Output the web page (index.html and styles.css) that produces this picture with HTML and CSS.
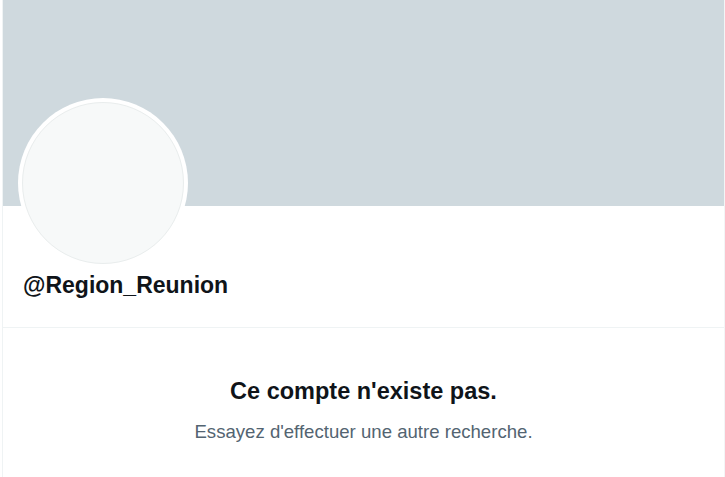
FILE: index.html
```html
<!DOCTYPE html>
<html lang="fr">
<head>
<meta charset="utf-8">
<title>@Region_Reunion</title>
<link rel="stylesheet" href="styles.css">
</head>
<body>
<main class="column">
  <div class="banner"></div>
  <section class="profile">
    <div class="avatar"><div class="avatar-inner"></div></div>
    <h1 class="handle">@Region_Reunion</h1>
  </section>
  <section class="empty">
    <h2 class="empty-title">Ce compte n'existe pas.</h2>
    <p class="empty-text">Essayez d'effectuer une autre recherche.</p>
  </section>
</main>
</body>
</html>
```
FILE: styles.css
```css
html, body {
  margin: 0;
  padding: 0;
  background: #ffffff;
}
body {
  font-family: "Liberation Sans", Arial, sans-serif;
  color: #0f1419;
  height: 477px;
  overflow: hidden;
}
.column {
  margin-left: 2px;
  border-left: 1px solid #eff3f4;
  border-right: 1px solid #f3f5f6;
  height: 477px;
  box-sizing: border-box;
}
.banner {
  height: 206px;
  background: #cfd9de;
}
.profile {
  padding: 0 0 28px 15px;
  border-bottom: 1px solid #eff3f4;
}
.avatar {
  width: 170px;
  height: 170px;
  margin-top: -108px;
  border-radius: 50%;
  background: #ffffff;
  padding: 4px;
  box-sizing: border-box;
}
.avatar-inner {
  width: 100%;
  height: 100%;
  border-radius: 50%;
  background: #f7f9f9;
  border: 1px solid #e9eded;
  box-sizing: border-box;
}
.handle {
  margin: 3px 0 0 5px;
  font-size: 23px;
  line-height: 28px;
  font-weight: 700;
}
.empty {
  padding-top: 49px;
  display: flex;
  flex-direction: column;
  align-items: center;
}
.empty-title {
  margin: 0;
  font-size: 23.5px;
  line-height: 28px;
  font-weight: 700;
}
.empty-text {
  margin: 16px 0 0;
  font-size: 18.6px;
  line-height: 22px;
  color: #536471;
}
```
